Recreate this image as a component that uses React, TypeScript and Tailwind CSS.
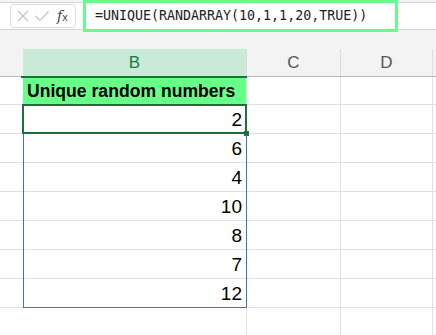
import React from 'react'

const values = [2, 6, 4, 10, 8, 7, 12]

const App: React.FC = () => {
  return (
    <div className="w-[436px] h-[335px] bg-[#f3f3f3] overflow-hidden font-['Liberation_Sans',Arial,sans-serif]">
      {/* Formula bar */}
      <div className="pt-[2px]">
        <div className="h-[28px] bg-white border-y border-[#d4d4d4] flex items-center">
          <div className="ml-[10px] w-[66px] h-[24px] border border-[#dcdcdc] rounded-[4px] flex items-center px-[4px] gap-[4px]">
            <svg width="14" height="14" viewBox="0 0 14 14" className="ml-[1px]">
              <path d="M2 2 L12 12 M12 2 L2 12" stroke="#c4c4c4" strokeWidth="1.2" fill="none" />
            </svg>
            <svg width="16" height="14" viewBox="0 0 16 14">
              <path d="M1.5 7 L6 11.5 L14.5 2.5" stroke="#c4c4c4" strokeWidth="1.2" fill="none" />
            </svg>
            <span className="ml-[3px] text-[14px] italic text-[#444] font-['DejaVu_Serif',serif] leading-none">
              f<span className="text-[11px] not-italic font-['Liberation_Sans',sans-serif]">x</span>
            </span>
          </div>
          <div className="ml-[7px] w-[315px] h-[32px] border-[3px] border-[#68fb8a] bg-white flex items-center pl-[9px]">
            <span className="text-[13.3px] text-[#222] font-['DejaVu_Sans_Mono',monospace]">
              =UNIQUE(RANDARRAY(10,1,1,20,TRUE))
            </span>
          </div>
        </div>
      </div>

      {/* Column headers */}
      <div className="mt-[19px] grid grid-cols-[23px_223px_94px_92px_1fr] h-[28px] border-b border-[#b8b8b8]">
        <div />
        <div className="relative bg-[#c8ead6] flex items-center justify-center text-[17px] text-[#1c7a45]">
          B
          <div className="absolute left-[-2px] right-[-1px] bottom-[-2px] h-[2px] bg-[#1e6e3e]" />
        </div>
        <div className="border-l border-[#dcdcdc] flex items-center justify-center text-[17px] text-[#555]">C</div>
        <div className="border-l border-[#dcdcdc] flex items-center justify-center text-[17px] text-[#555]">D</div>
        <div className="border-l border-[#dcdcdc]" />
      </div>

      {/* Rows */}
      <div className="bg-white">
        <div className="grid grid-cols-[23px_223px_94px_92px_1fr] h-[28px] border-b border-[#e0e0e0]">
          <div />
          <div className="bg-[#66ff88] flex items-center pl-[4px] text-[17.6px] font-bold text-black leading-none pt-[2px]">
            Unique random numbers
          </div>
          <div className="border-l border-[#e0e0e0]" />
          <div className="border-l border-[#e0e0e0]" />
          <div className="border-l border-[#e0e0e0]" />
        </div>
        {values.map((v, i) => {
          const selected = i === 0
          const last = i === values.length - 1
          return (
            <div key={i} className="grid grid-cols-[23px_223px_94px_92px_1fr] h-[29px] border-b border-[#e0e0e0]">
              <div />
              <div className="relative flex items-end justify-end pr-[4px] pb-[4px] text-[19px] text-black leading-none">
                {selected ? (
                  <>
                    <div className="absolute left-[-1px] right-[-1px] top-[-1px] bottom-[-1px] border-2 border-[#1e6e3e]" />
                    <div className="absolute right-[-3px] bottom-[-3px] w-[5px] h-[5px] bg-[#1e6e3e]" />
                  </>
                ) : (
                  <div
                    className={
                      last
                        ? 'absolute left-0 right-[-1px] top-0 bottom-[-1px] border-x border-b border-[#3f6fcf]'
                        : 'absolute left-0 right-[-1px] top-0 bottom-[-1px] border-x border-[#3f6fcf]'
                    }
                  />
                )}
                <span className="relative">{v}</span>
              </div>
              <div className="border-l border-[#e0e0e0]" />
              <div className="border-l border-[#e0e0e0]" />
              <div className="border-l border-[#e0e0e0]" />
            </div>
          )
        })}
        <div className="grid grid-cols-[23px_223px_94px_92px_1fr] h-[40px]">
          <div />
          <div />
          <div className="border-l border-[#e0e0e0]" />
          <div className="border-l border-[#e0e0e0]" />
          <div className="border-l border-[#e0e0e0]" />
        </div>
      </div>
    </div>
  )
}

export default App
